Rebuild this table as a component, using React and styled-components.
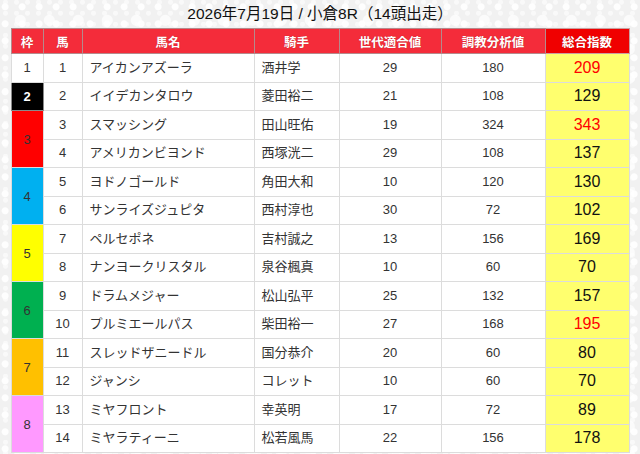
import React from "react";
import styled, { createGlobalStyle } from "styled-components";

const Global = createGlobalStyle`
  html, body { margin: 0; padding: 0; }
  body {
    width: 640px;
    height: 454px;
    overflow: hidden;
    font-family: "Liberation Sans", "Noto Sans CJK JP", sans-serif;
    background-color: #f1f1f1;
    background-image:
      radial-gradient(circle at 30% 40%, rgba(255,255,255,0.9) 0 3px, transparent 4px),
      radial-gradient(circle at 70% 70%, rgba(255,255,255,0.7) 0 5px, transparent 6px),
      radial-gradient(circle at 50% 20%, rgba(255,255,255,0.6) 0 2px, transparent 3px);
    background-size: 17px 17px, 29px 29px, 11px 11px;
  }
`;

const Page = styled.div`
  display: flex;
  flex-direction: column;
  align-items: center;
  padding-top: 2px;
`;

const Title = styled.h1`
  margin: 0 0 3px 0;
  height: 23px;
  font-size: 15.5px;
  line-height: 23px;
  font-weight: 400;
  color: #111;
`;

const Table = styled.table`
  width: 618px;
  border-collapse: collapse;
  table-layout: fixed;
  background: #fff;
  font-size: 13px;
  color: #333;
`;

const Th = styled.th`
  height: 24px;
  padding: 0;
  background: ${(p) => (p.$strong ? "#f00000" : "#f42c3a")};
  color: #fff;
  font-family: "Noto Sans CJK JP", sans-serif;
  font-size: 12.5px;
  font-weight: 700;
  border: 1px solid ${(p) => (p.$strong ? "#c9a0a0" : "#b48a8c")};
  text-shadow: 0 0 1px rgba(120,0,0,0.5);
  text-align: center;
`;

const Tr = styled.tr`
  height: 28.5px;
`;

const Td = styled.td`
  padding: 0 ${(p) => (p.$left ? "7px" : "0")};
  border: 1px solid #dcdcdc;
  text-align: ${(p) => (p.$left ? "left" : "center")};
  white-space: nowrap;
  line-height: 18px;
`;

const FrameTd = styled.td`
  padding: 0;
  border: 1px solid ${(p) => (p.$frame === 2 ? "#8a8a8a" : "#dcdcdc")};
  background: ${(p) => p.$bg};
  color: ${(p) => (p.$frame === 2 ? "#fff" : "#333")};
  font-weight: ${(p) => (p.$frame === 2 ? 700 : 400)};
  text-align: center;
  font-size: 13px;
`;

const ScoreTd = styled.td`
  padding: 0;
  border: 1px solid #dcdcdc;
  background: #ffff6e;
  text-align: center;
  font-size: 16px;
  color: ${(p) => (p.$hot ? "#f00" : "#111")};
  font-weight: 400;
`;

const frameColors = {
  1: "#ffffff",
  2: "#000000",
  3: "#ff0000",
  4: "#00b0f0",
  5: "#ffff00",
  6: "#00b050",
  7: "#ffc000",
  8: "#ff99ff",
};

const rows = [
  [1, 1, "アイカンアズーラ", "酒井学", 29, 180, 209, true],
  [2, 2, "イイデカンタロウ", "菱田裕二", 21, 108, 129],
  [3, 3, "スマッシング", "田山旺佑", 19, 324, 343, true],
  [3, 4, "アメリカンビヨンド", "西塚洸二", 29, 108, 137],
  [4, 5, "ヨドノゴールド", "角田大和", 10, 120, 130],
  [4, 6, "サンライズジュピタ", "西村淳也", 30, 72, 102],
  [5, 7, "ペルセポネ", "吉村誠之", 13, 156, 169],
  [5, 8, "ナンヨークリスタル", "泉谷楓真", 10, 60, 70],
  [6, 9, "ドラムメジャー", "松山弘平", 25, 132, 157],
  [6, 10, "プルミエールパス", "柴田裕一", 27, 168, 195, true],
  [7, 11, "スレッドザニードル", "国分恭介", 20, 60, 80],
  [7, 12, "ジャンシ", "コレット", 10, 60, 70],
  [8, 13, "ミヤフロント", "幸英明", 17, 72, 89],
  [8, 14, "ミヤラティーニ", "松若風馬", 22, 156, 178],
];

const cols = [32, 39, 172, 85, 102, 104, 84];

export default function App() {
  return (
    <>
      <Global />
      <Page>
        <Title>2026年7月19日 / 小倉8R（14頭出走）</Title>
        <Table>
          <colgroup>
            {cols.map((w, i) => (
              <col key={i} style={{ width: w }} />
            ))}
          </colgroup>
          <thead>
            <tr>
              <Th>枠</Th>
              <Th>馬</Th>
              <Th>馬名</Th>
              <Th>騎手</Th>
              <Th>世代適合値</Th>
              <Th>調教分析値</Th>
              <Th $strong>総合指数</Th>
            </tr>
          </thead>
          <tbody>
            {rows.map((r, i) => {
              const [frame, num, name, jockey, a, b, total, hot] = r;
              const firstOfFrame = i === 0 || rows[i - 1][0] !== frame;
              const span = rows.filter((x) => x[0] === frame).length;
              return (
                <Tr key={num}>
                  {firstOfFrame && (
                    <FrameTd rowSpan={span} $frame={frame} $bg={frameColors[frame]}>
                      {frame}
                    </FrameTd>
                  )}
                  <Td>{num}</Td>
                  <Td $left>{name}</Td>
                  <Td $left>{jockey}</Td>
                  <Td>{a}</Td>
                  <Td>{b}</Td>
                  <ScoreTd $hot={hot}>{total}</ScoreTd>
                </Tr>
              );
            })}
          </tbody>
        </Table>
      </Page>
    </>
  );
}
